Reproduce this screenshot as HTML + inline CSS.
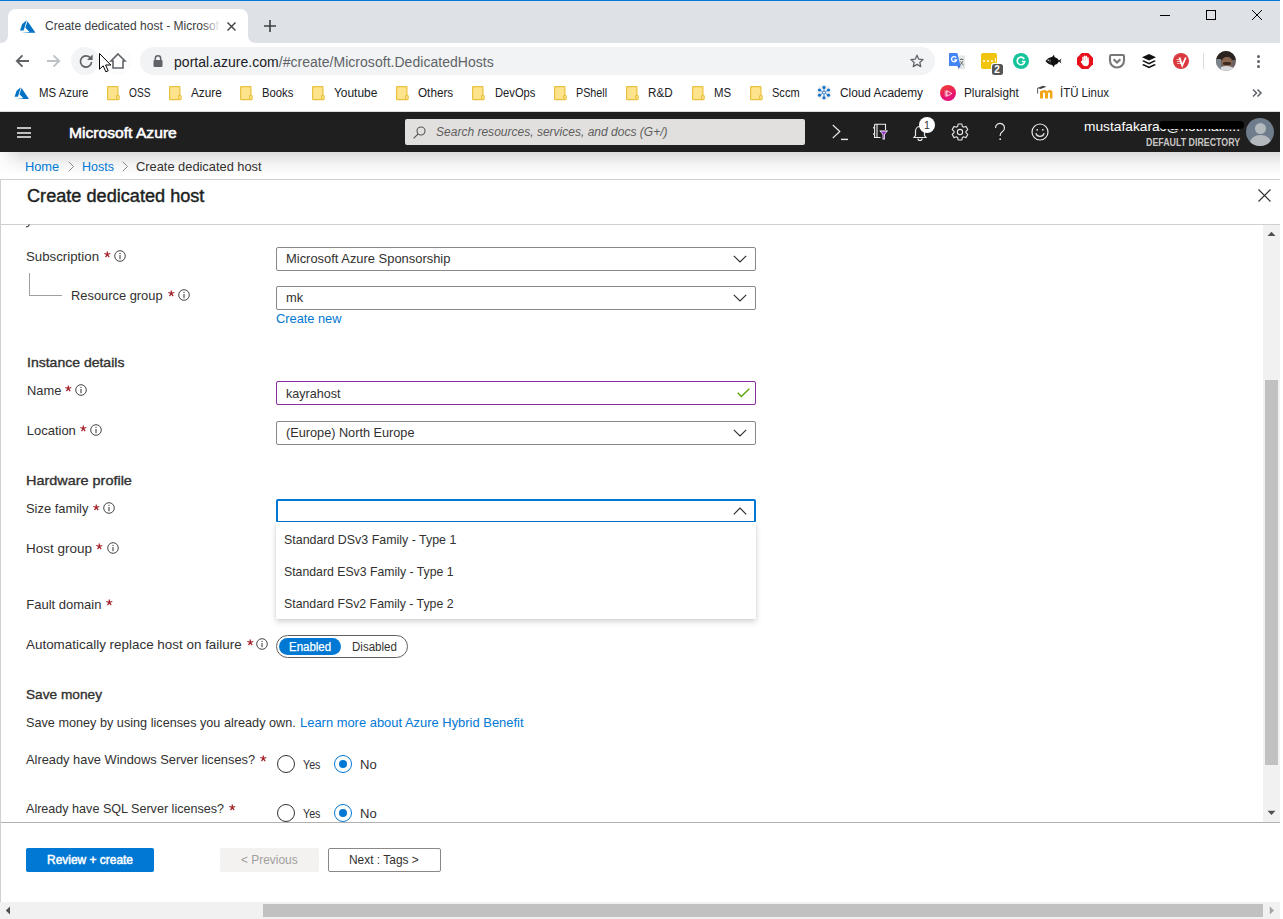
<!DOCTYPE html><html><head><meta charset="utf-8"><style>
*{margin:0;padding:0;box-sizing:border-box}
html,body{width:1283px;height:919px;overflow:hidden;background:#fff;font-family:"Liberation Sans",sans-serif}
.a{position:absolute}
.t{position:absolute;line-height:1;white-space:pre;transform-origin:0 0;font-family:"Liberation Sans",sans-serif}
svg{position:absolute;overflow:visible}
</style></head><body><div class="a" style="left:0;top:0;width:1280px;height:1px;background:#0078d7"></div>
<div class="a" style="left:0;top:1px;width:1280px;height:42px;background:#dee1e6"></div>
<div class="a" style="left:8px;top:9px;width:240px;height:35px;background:#fff;border-radius:8px 8px 0 0"></div>
<svg style="left:0;top:35px" width="8" height="8"><path d="M0 8 Q8 8 8 0 L8 8Z" fill="#fff"/></svg>
<svg style="left:248px;top:35px" width="8" height="8"><path d="M0 0 Q0 8 8 8 L0 8Z" fill="#fff"/></svg>
<svg style="left:20px;top:20px" width="16" height="14" viewBox="0 0 16 14"><path d="M6.8 0.3 L2.2 4 L0 10.5 L3.6 10.5Z" fill="#0072c6"/><path d="M7.5 1.2 L5.3 7.8 L9.5 12 L1.5 12.8 L15.5 12.8Z" fill="#0072c6"/></svg>
<div class="t" style="left:44.60px;top:19.84px;font-size:12px;color:#3c4043;font-weight:400;font-style:normal;transform:scaleX(1.0032);">Create dedicated host - Microsof</div>
<div class="a" style="left:203px;top:14px;width:18px;height:22px;background:linear-gradient(90deg,rgba(255,255,255,0),#fff 95%)"></div>
<svg style="left:227px;top:22px" width="9" height="9"><path d="M0.5 0.5L8.5 8.5M8.5 0.5L0.5 8.5" stroke="#3c4043" stroke-width="1.4"/></svg>
<svg style="left:264px;top:20px" width="12" height="12"><path d="M6 0V12M0 6H12" stroke="#3c4043" stroke-width="1.6"/></svg>
<div class="a" style="left:1160px;top:15px;width:10px;height:1px;background:#000"></div>
<div class="a" style="left:1206px;top:10px;width:10px;height:10px;border:1px solid #000"></div>
<svg style="left:1252px;top:10px" width="10" height="10"><path d="M0 0L10 10M10 0L0 10" stroke="#000" stroke-width="1"/></svg>
<div class="a" style="left:1280px;top:0;width:3px;height:919px;background:#fff"></div>
<svg style="left:15px;top:54px" width="14" height="14"><path d="M14 7H2M7.5 1.3L1.8 7L7.5 12.7" stroke="#5f6368" stroke-width="1.8" fill="none"/></svg>
<svg style="left:47px;top:54px" width="14" height="14"><path d="M0 7H12M6.5 1.3L12.2 7L6.5 12.7" stroke="#bdc1c6" stroke-width="1.8" fill="none"/></svg>
<div class="a" style="left:71px;top:47px;width:28px;height:28px;border-radius:50%;background:#f3f4f5"></div>
<div class="a" style="left:104px;top:47px;width:28px;height:28px;border-radius:50%;background:#fcfcfc"></div>
<svg style="left:79px;top:54px" width="14" height="14" viewBox="0 0 14 14"><path d="M11.6 4.2A5.6 5.6 0 1 0 12.6 8" stroke="#5f6368" stroke-width="1.7" fill="none"/><path d="M13.6 0.4V6H8Z" fill="#5f6368"/></svg>
<svg style="left:110px;top:53px" width="16" height="16" viewBox="0 0 16 16"><path d="M8 1L15 8H13V15H3V8H1Z" stroke="#5f6368" stroke-width="1.6" fill="none" stroke-linejoin="miter"/></svg>
<div class="a" style="left:140px;top:47px;width:795px;height:28px;border-radius:14px;background:#f1f3f4"></div>
<svg style="left:153px;top:55px" width="10" height="12" viewBox="0 0 10 12"><path d="M2.3 5V3.5A2.7 2.7 0 0 1 7.7 3.5V5" stroke="#5f6368" stroke-width="1.5" fill="none"/><rect x="0.5" y="5" width="9" height="7" rx="1" fill="#5f6368"/></svg>
<div class="t" style="left:174px;top:55.05px;letter-spacing:0.03px;font-size:14px;color:#202124;">portal.azure.com<span style="color:#5f6368">/#create/Microsoft.DedicatedHosts</span></div>
<svg style="left:909px;top:53px" width="16" height="16" viewBox="0 0 24 24"><path d="M12 3.2l2.6 6 6.5.6-4.9 4.3 1.5 6.4L12 17.1l-5.7 3.4 1.5-6.4-4.9-4.3 6.5-.6z" stroke="#5f6368" stroke-width="1.9" fill="none" stroke-linejoin="round"/></svg>
<svg style="left:949px;top:53px" width="17" height="17" viewBox="0 0 17 17"><rect x="9.5" y="2.5" width="6.5" height="13.5" fill="#e6e6e6"/><path d="M11 6.5H14.5M12.7 5.5V6.5M11.5 8.5L14.5 12.5M14 8L11 12" stroke="#4a5a5a" stroke-width="0.8"/><path d="M0 0.5Q0 0 0.5 0H8.3L11.6 13H0.5Q0 13 0 12.5Z" fill="#4285f4"/><path d="M8.5 13H11.6L9.5 15.7Z" fill="#3367d6"/><path d="M7.2 4.6A2.6 2.6 0 1 0 7.6 7H5.2" stroke="#fff" stroke-width="1.3" fill="none"/></svg>
<div class="a" style="left:981px;top:53px;width:16px;height:16px;background:#f1c40f;border-radius:2px"></div>
<div class="a" style="left:983.2px;top:60px;width:2px;height:2px;border-radius:50%;background:#fff"></div>
<div class="a" style="left:987.2px;top:60px;width:2px;height:2px;border-radius:50%;background:#fff"></div>
<div class="a" style="left:991.2px;top:60px;width:2px;height:2px;border-radius:50%;background:#fff"></div>
<div class="a" style="left:994.6px;top:58px;width:1px;height:4px;background:#fff8d0"></div>
<div class="a" style="left:990.5px;top:62.5px;width:13px;height:13px;background:#fff;border-radius:3px"></div>
<div class="a" style="left:991.5px;top:63.5px;width:11px;height:11px;background:#555;border-radius:2.5px"></div>
<div class="t" style="left:994.2px;top:64.6px;font-size:10px;color:#fff;font-weight:700">2</div>
<div class="a" style="left:1013px;top:53px;width:16px;height:16px;background:#15c39a;border-radius:50%"></div>
<svg style="left:1016px;top:56px" width="10" height="10" viewBox="0 0 10 10"><path d="M8.3 3A3.8 3.8 0 1 0 8.8 5.5H5.8" stroke="#fff" stroke-width="1.6" fill="none"/></svg>
<svg style="left:1045px;top:54px" width="17" height="14" viewBox="0 0 17 14"><path d="M0.5 7Q3 3.5 7 3L9 0.8L9.5 3Q13 4 14 6.5L16.5 4.5L15.5 7L16.5 9.5L14 7.5Q13 10 9.5 11L9 13.2L7 11Q3 10.5 0.5 7Z" fill="#111"/><circle cx="3.2" cy="6.3" r="0.7" fill="#fff"/><path d="M5 5.5V8.5" stroke="#fff" stroke-width="0.5"/></svg>
<svg style="left:1077px;top:53px" width="16" height="16" viewBox="0 0 16 16"><path d="M4.7 0H11.3L16 4.7V11.3L11.3 16H4.7L0 11.3V4.7Z" fill="#e8101a"/><path d="M6 8.5V4.2M7.7 8V3.2M9.4 8V3.6M11 8.8V5" stroke="#fff" stroke-width="1.5" stroke-linecap="round" fill="none"/><path d="M5.2 7.5H11.8V10.5Q11.8 13.3 8.6 13.3Q6.5 13.3 5.5 11.5L3.8 8.8Q3.6 8 4.5 8.1Z" fill="#fff"/></svg>
<svg style="left:1109px;top:54px" width="16" height="15" viewBox="0 0 16 15"><path d="M2.2 1H13.8Q15 1 15 2.2V6.5A7 7 0 0 1 1 6.5V2.2Q1 1 2.2 1Z" stroke="#777" stroke-width="2.1" fill="none"/><path d="M4.6 5.2L8 8.6L11.4 5.2" stroke="#777" stroke-width="2.1" fill="none"/></svg>
<svg style="left:1141px;top:53px" width="16" height="16" viewBox="0 0 16 16"><path d="M8 1L15 4.3L8 7.6L1 4.3Z" fill="#111"/><path d="M2.6 7.3L1 8.1L8 11.4L15 8.1L13.4 7.3L8 9.8Z" fill="#111"/><path d="M2.6 11.1L1 11.9L8 15.2L15 11.9L13.4 11.1L8 13.6Z" fill="#111"/></svg>
<div class="a" style="left:1173px;top:53px;width:16px;height:16px;background:#da3940;border-radius:50%"></div>
<svg style="left:1176px;top:57px" width="11" height="9" viewBox="0 0 11 9"><path d="M3.5 0.5L6.2 8.5L9.8 0.5" stroke="#fff" stroke-width="1.8" fill="none"/><path d="M0.5 2.5H4.3M0.8 4.5H4.9M1.1 6.5H5.5" stroke="#fff" stroke-width="0.7"/></svg>
<div class="a" style="left:1203px;top:53px;width:1px;height:16px;background:#dadce0"></div>
<div class="a" style="left:1216px;top:51px;width:20px;height:20px;border-radius:50%;overflow:hidden;background:#6b6460"><div class="a" style="left:0;top:0;width:20px;height:9px;background:#2a2320"></div><div class="a" style="left:6px;top:6px;width:10px;height:10px;border-radius:45%;background:#8a6550"></div><div class="a" style="left:7px;top:11px;width:8px;height:3px;background:#3a2a22;border-radius:40%"></div><div class="a" style="left:3px;top:15px;width:15px;height:6px;background:#d8d8dc;border-radius:50% 50% 0 0"></div><div class="a" style="left:0;top:8px;width:5px;height:12px;background:#7d848c"></div></div>
<div class="a" style="left:1257px;top:54.6px;width:3.4px;height:3.4px;border-radius:50%;background:#5f6368"></div>
<div class="a" style="left:1257px;top:59.6px;width:3.4px;height:3.4px;border-radius:50%;background:#5f6368"></div>
<div class="a" style="left:1257px;top:64.8px;width:3.4px;height:3.4px;border-radius:50%;background:#5f6368"></div>
<svg style="left:14px;top:87px" width="16" height="13" viewBox="0 0 16 14"><path d="M6.8 0.3 L2.2 4 L0 10.5 L3.6 10.5Z" fill="#0072c6"/><path d="M7.5 1.2 L5.3 7.8 L9.5 12 L1.5 12.8 L15.5 12.8Z" fill="#0072c6"/></svg>
<div class="t" style="left:38.70px;top:86.54px;font-size:12px;color:#202124;font-weight:400;font-style:normal;transform:scaleX(0.9497);">MS Azure</div>
<svg style="left:107px;top:86px" width="13" height="15" viewBox="0 0 13 15"><rect x="0.6" y="0.6" width="10.3" height="13" rx="0.6" fill="#fde48c" stroke="#e9c140" stroke-width="1.2"/><rect x="9.6" y="9.2" width="2.6" height="4.4" rx="1" fill="#fde48c" stroke="#e9c140" stroke-width="1.1"/></svg>
<div class="t" style="left:129.00px;top:86.54px;font-size:12px;color:#202124;font-weight:400;font-style:normal;transform:scaleX(0.8444);">OSS</div>
<svg style="left:169px;top:86px" width="13" height="15" viewBox="0 0 13 15"><rect x="0.6" y="0.6" width="10.3" height="13" rx="0.6" fill="#fde48c" stroke="#e9c140" stroke-width="1.2"/><rect x="9.6" y="9.2" width="2.6" height="4.4" rx="1" fill="#fde48c" stroke="#e9c140" stroke-width="1.1"/></svg>
<div class="t" style="left:190.50px;top:86.54px;font-size:12px;color:#202124;font-weight:400;font-style:normal;transform:scaleX(0.9827);">Azure</div>
<svg style="left:240px;top:86px" width="13" height="15" viewBox="0 0 13 15"><rect x="0.6" y="0.6" width="10.3" height="13" rx="0.6" fill="#fde48c" stroke="#e9c140" stroke-width="1.2"/><rect x="9.6" y="9.2" width="2.6" height="4.4" rx="1" fill="#fde48c" stroke="#e9c140" stroke-width="1.1"/></svg>
<div class="t" style="left:262.40px;top:86.54px;font-size:12px;color:#202124;font-weight:400;font-style:normal;transform:scaleX(0.9413);">Books</div>
<svg style="left:312px;top:86px" width="13" height="15" viewBox="0 0 13 15"><rect x="0.6" y="0.6" width="10.3" height="13" rx="0.6" fill="#fde48c" stroke="#e9c140" stroke-width="1.2"/><rect x="9.6" y="9.2" width="2.6" height="4.4" rx="1" fill="#fde48c" stroke="#e9c140" stroke-width="1.1"/></svg>
<div class="t" style="left:334.00px;top:86.54px;font-size:12px;color:#202124;font-weight:400;font-style:normal;transform:scaleX(0.9929);">Youtube</div>
<svg style="left:396px;top:86px" width="13" height="15" viewBox="0 0 13 15"><rect x="0.6" y="0.6" width="10.3" height="13" rx="0.6" fill="#fde48c" stroke="#e9c140" stroke-width="1.2"/><rect x="9.6" y="9.2" width="2.6" height="4.4" rx="1" fill="#fde48c" stroke="#e9c140" stroke-width="1.1"/></svg>
<div class="t" style="left:418.00px;top:86.54px;font-size:12px;color:#202124;font-weight:400;font-style:normal;transform:scaleX(0.9774);">Others</div>
<svg style="left:472px;top:86px" width="13" height="15" viewBox="0 0 13 15"><rect x="0.6" y="0.6" width="10.3" height="13" rx="0.6" fill="#fde48c" stroke="#e9c140" stroke-width="1.2"/><rect x="9.6" y="9.2" width="2.6" height="4.4" rx="1" fill="#fde48c" stroke="#e9c140" stroke-width="1.1"/></svg>
<div class="t" style="left:494.60px;top:86.54px;font-size:12px;color:#202124;font-weight:400;font-style:normal;transform:scaleX(0.9321);">DevOps</div>
<svg style="left:554px;top:86px" width="13" height="15" viewBox="0 0 13 15"><rect x="0.6" y="0.6" width="10.3" height="13" rx="0.6" fill="#fde48c" stroke="#e9c140" stroke-width="1.2"/><rect x="9.6" y="9.2" width="2.6" height="4.4" rx="1" fill="#fde48c" stroke="#e9c140" stroke-width="1.1"/></svg>
<div class="t" style="left:576.40px;top:86.54px;font-size:12px;color:#202124;font-weight:400;font-style:normal;transform:scaleX(0.8966);">PShell</div>
<svg style="left:626px;top:86px" width="13" height="15" viewBox="0 0 13 15"><rect x="0.6" y="0.6" width="10.3" height="13" rx="0.6" fill="#fde48c" stroke="#e9c140" stroke-width="1.2"/><rect x="9.6" y="9.2" width="2.6" height="4.4" rx="1" fill="#fde48c" stroke="#e9c140" stroke-width="1.1"/></svg>
<div class="t" style="left:648.40px;top:86.54px;font-size:12px;color:#202124;font-weight:400;font-style:normal;transform:scaleX(0.9707);">R&amp;D</div>
<svg style="left:692px;top:86px" width="13" height="15" viewBox="0 0 13 15"><rect x="0.6" y="0.6" width="10.3" height="13" rx="0.6" fill="#fde48c" stroke="#e9c140" stroke-width="1.2"/><rect x="9.6" y="9.2" width="2.6" height="4.4" rx="1" fill="#fde48c" stroke="#e9c140" stroke-width="1.1"/></svg>
<div class="t" style="left:713.90px;top:86.54px;font-size:12px;color:#202124;font-weight:400;font-style:normal;transform:scaleX(0.9500);">MS</div>
<svg style="left:750px;top:86px" width="13" height="15" viewBox="0 0 13 15"><rect x="0.6" y="0.6" width="10.3" height="13" rx="0.6" fill="#fde48c" stroke="#e9c140" stroke-width="1.2"/><rect x="9.6" y="9.2" width="2.6" height="4.4" rx="1" fill="#fde48c" stroke="#e9c140" stroke-width="1.1"/></svg>
<div class="t" style="left:772.00px;top:86.54px;font-size:12px;color:#202124;font-weight:400;font-style:normal;transform:scaleX(0.9200);">Sccm</div>
<svg style="left:816px;top:85px" width="16" height="16" viewBox="0 0 16 16"><circle cx="8" cy="7.6" r="7.6" fill="#efefef"/><g stroke="#2a7fd0" stroke-width="0.8"><path d="M8 6V2.6M8 9.2V12.6M6.6 6.8L3.5 5M9.4 6.8L12.5 5M6.6 8.4L3.5 10.2M9.4 8.4L12.5 10.2"/></g><circle cx="8" cy="7.6" r="1.6" fill="none" stroke="#2a7fd0" stroke-width="0.9"/><g fill="#1b74c8"><circle cx="8" cy="2.4" r="1.6"/><circle cx="8" cy="12.8" r="1.6"/><circle cx="3.5" cy="5" r="1.6"/><circle cx="12.5" cy="5" r="1.6"/><circle cx="3.5" cy="10.2" r="1.6"/><circle cx="12.5" cy="10.2" r="1.6"/></g></svg>
<div class="t" style="left:840.00px;top:86.54px;font-size:12px;color:#202124;font-weight:400;font-style:normal;transform:scaleX(0.9875);">Cloud Academy</div>
<div class="a" style="left:940px;top:85px;width:16px;height:16px;border-radius:50%;background:linear-gradient(160deg,#f0452b,#e8166a 60%,#e0108a)"></div>
<svg style="left:944px;top:89px" width="9" height="9" viewBox="0 0 9 9"><path d="M3 1.8L7.8 4.5L3 7.2Z" fill="none" stroke="#fff" stroke-width="0.8"/><path d="M1.2 1.5V7.5M2.4 1.2V7.8" stroke="#fff" stroke-width="0.6"/></svg>
<div class="t" style="left:964.30px;top:86.54px;font-size:12px;color:#202124;font-weight:400;font-style:normal;transform:scaleX(0.9762);">Pluralsight</div>
<svg style="left:1036px;top:85px" width="17" height="14" viewBox="0 0 17 14"><path d="M4 6.5V13.5H7V8.5Q7 7.5 8 7.5Q9 7.5 9 8.5V13.5H12V8.5Q12 7.5 13 7.5Q14 7.5 14 8.5V13.5H16.5V7.5Q16.5 5 14 5Q12.5 5 11 6.3Q10 5 8.5 5Q7 5 6 6V5.2Z" fill="#f2a516"/><path d="M1 3L7 0.8L10.5 1.8L4.5 4Z" fill="#444"/><path d="M1.6 3.2V8.5" stroke="#444" stroke-width="0.9"/></svg>
<div class="t" style="left:1059.60px;top:86.54px;font-size:12px;color:#202124;font-weight:400;font-style:normal;transform:scaleX(0.9541);">İTÜ Linux</div>
<svg style="left:1252px;top:89px" width="10" height="8" viewBox="0 0 10 8"><path d="M1 0.5L4.5 4L1 7.5M5.5 0.5L9 4L5.5 7.5" stroke="#5f6368" stroke-width="1.5" fill="none"/></svg>
<div class="a" style="left:0;top:111px;width:1280px;height:1px;background:#dadce0"></div>
<div class="a" style="left:0;top:112px;width:1280px;height:40px;background:#1f1f1f"></div>
<div class="a" style="left:17px;top:127px;width:14px;height:2px;background:#c0c0c0"></div>
<div class="a" style="left:17px;top:131.5px;width:14px;height:2px;background:#c0c0c0"></div>
<div class="a" style="left:17px;top:136px;width:14px;height:2px;background:#c0c0c0"></div>
<div class="t" style="left:68.50px;top:125.53px;font-size:14.5px;color:#fff;font-weight:400;font-style:normal;transform:scaleX(1.0788);-webkit-text-stroke:0.35px #fff;-webkit-text-stroke:0.55px #fff;">Microsoft Azure</div>
<div class="a" style="left:405px;top:119px;width:400px;height:26px;background:#e1e0df;border-radius:2px"></div>
<svg style="left:413px;top:126px" width="13" height="13" viewBox="0 0 13 13"><circle cx="8" cy="5" r="4" stroke="#555" stroke-width="1.1" fill="none"/><path d="M5.2 7.8L0.6 12.4" stroke="#555" stroke-width="1.2"/></svg>
<div class="t" style="left:435.50px;top:126.12px;font-size:12.5px;color:#605e5c;font-weight:400;font-style:italic;transform:scaleX(0.9617);">Search resources, services, and docs (G+/)</div>
<svg style="left:832px;top:124px" width="17" height="17" viewBox="0 0 17 17"><path d="M0.8 1L7.8 7.5L0.8 14" stroke="#e8e8e8" stroke-width="1.2" fill="none"/><path d="M9 15.4H16" stroke="#e8e8e8" stroke-width="1.4"/></svg>
<svg style="left:872px;top:123px" width="17" height="17" viewBox="0 0 17 17"><path d="M2.6 1.3H13.5V7M2.6 1.3V14.5H8.5M5 1.3V14.5" stroke="#f0f0f0" stroke-width="1.1" fill="none"/><path d="M1 4.7H2.6M1 11H2.6" stroke="#d8d8d8" stroke-width="1.6"/><path d="M7.2 7.6H16.2L12.8 11.6V16.5H10.6V11.6Z" fill="#fff"/><path d="M8.6 8.5H14.8L12.1 11.3V15.6H11.3V11.3Z" fill="#8f30c0"/></svg>
<svg style="left:913px;top:124px" width="14" height="17" viewBox="0 0 14 17"><path d="M1 13.5H13L11.5 11.5V7A4.5 4.5 0 0 0 2.5 7V11.5Z" stroke="#e8e8e8" stroke-width="1.2" fill="none"/><path d="M5 14.5A2 2 0 0 0 9 14.5" stroke="#e8e8e8" stroke-width="1.2" fill="none"/></svg>
<div class="a" style="left:919px;top:117px;width:16px;height:16px;border-radius:50%;background:#fff"></div>
<div class="t" style="left:924px;top:119.5px;font-size:10.5px;color:#323130">1</div>
<svg style="left:950px;top:122px" width="20" height="20" viewBox="0 0 24 24"><path d="M19.14 12.94c.04-.3.06-.61.06-.94 0-.32-.02-.64-.07-.94l2.03-1.58c.18-.14.23-.41.12-.61l-1.92-3.32c-.12-.22-.37-.29-.59-.22l-2.39.96c-.5-.38-1.03-.7-1.62-.94l-.36-2.54c-.04-.24-.24-.41-.48-.41h-3.84c-.24 0-.43.17-.47.41l-.36 2.54c-.59.24-1.13.57-1.62.94l-2.39-.96c-.22-.08-.47 0-.59.22L2.74 8.87c-.12.21-.08.47.12.61l2.03 1.58c-.05.3-.09.63-.09.94s.02.64.07.94l-2.03 1.58c-.18.14-.23.41-.12.61l1.92 3.32c.12.22.37.29.59.22l2.39-.96c.5.38 1.03.7 1.62.94l.36 2.54c.05.24.24.41.48.41h3.84c.24 0 .44-.17.47-.41l.36-2.54c.59-.24 1.13-.56 1.62-.94l2.39.96c.22.08.47 0 .59-.22l1.92-3.32c.12-.22.07-.47-.12-.61l-2.01-1.58z" stroke="#e8e8e8" stroke-width="1.3" fill="none"/><circle cx="12" cy="12" r="3.2" stroke="#e8e8e8" stroke-width="1.3" fill="none"/></svg>
<svg style="left:994px;top:123px" width="12" height="18" viewBox="0 0 12 18"><path d="M1.5 5A4.5 4.5 0 1 1 8.5 8.6C7 9.6 6.2 10.5 6.2 12.3V13" stroke="#e8e8e8" stroke-width="1.2" fill="none"/><circle cx="6.2" cy="16.2" r="0.9" fill="#e8e8e8"/></svg>
<svg style="left:1031px;top:123px" width="18" height="18" viewBox="0 0 18 18"><circle cx="9" cy="9" r="8" stroke="#e8e8e8" stroke-width="1.2" fill="none"/><circle cx="6.2" cy="6.8" r="0.9" fill="#e8e8e8"/><circle cx="11.8" cy="6.8" r="0.9" fill="#e8e8e8"/><path d="M4.8 10.2A4.4 4.4 0 0 0 13.2 10.2" stroke="#e8e8e8" stroke-width="1.2" fill="none"/></svg>
<div class="t" style="left:1084.00px;top:119.60px;font-size:13px;color:#fff;font-weight:400;font-style:normal;transform:scaleX(1.0571);">mustafakarac@hotmail....</div>
<div class="a" style="left:1159px;top:121px;width:85px;height:8px;background:#000;border-radius:4px"></div>
<div class="t" style="left:1145.60px;top:137.53px;font-size:10px;color:#c8c6c4;font-weight:700;font-style:normal;transform:scaleX(0.8846);">DEFAULT DIRECTORY</div>
<div class="a" style="left:1246px;top:118px;width:28px;height:28px;border-radius:50%;background:#6e7c8c;overflow:hidden"><div class="a" style="left:8.5px;top:5px;width:11px;height:11px;border-radius:50%;background:#b4b9be"></div><div class="a" style="left:3.5px;top:17px;width:21px;height:16px;border-radius:50% 50% 0 0;background:#b4b9be"></div></div>
<div class="a" style="left:0;top:152px;width:1280px;height:28px;background:linear-gradient(#dcdcdc,#f4f4f4 45%,#fff 85%)"></div>
<div class="t" style="left:25.30px;top:159.80px;font-size:13px;color:#0078d4;font-weight:400;font-style:normal;transform:scaleX(0.9835);">Home</div>
<svg style="left:68px;top:161px" width="7" height="11"><path d="M0.8 0.8L5.5 5.5L0.8 10.2" stroke="#8a8886" stroke-width="1" fill="none"/></svg>
<div class="t" style="left:82.00px;top:159.80px;font-size:13px;color:#0078d4;font-weight:400;font-style:normal;transform:scaleX(0.9598);">Hosts</div>
<svg style="left:122px;top:161px" width="7" height="11"><path d="M0.8 0.8L5.5 5.5L0.8 10.2" stroke="#8a8886" stroke-width="1" fill="none"/></svg>
<div class="t" style="left:136.40px;top:159.80px;font-size:13px;color:#323130;font-weight:400;font-style:normal;transform:scaleX(0.9875);">Create dedicated host</div>
<div class="a" style="left:0;top:179px;width:1280px;height:1px;background:#d2d0ce"></div>
<div class="a" style="left:0;top:179px;width:1px;height:740px;background:#d2d0ce"></div>
<div class="t" style="left:26.60px;top:188.19px;font-size:17.5px;color:#201f1e;font-weight:400;font-style:normal;transform:scaleX(1.0361);-webkit-text-stroke:0.4px #201f1e;">Create dedicated host</div>
<svg style="left:1258px;top:189px" width="13" height="13"><path d="M0.5 0.5L12.5 12.5M12.5 0.5L0.5 12.5" stroke="#323130" stroke-width="1.1"/></svg>
<div class="a" style="left:1px;top:224px;width:1279px;height:1px;background:#d2d0ce"></div>
<svg style="left:25px;top:224px" width="6" height="4"><path d="M1 3C2.5 3 3.5 2.5 4.5 0.5" stroke="#323130" stroke-width="1.1" fill="none"/></svg>
<div class="a" style="left:0;top:152px;width:22px;height:27px;background:linear-gradient(90deg,rgba(255,255,255,0.85),rgba(255,255,255,0))"></div>
<div class="a" style="left:1263px;top:225px;width:17px;height:597px;background:#f1f1f1"></div>
<svg style="left:1267px;top:231px" width="9" height="6"><path d="M0.5 5L4.5 0.8L8.5 5Z" fill="#505050"/></svg>
<svg style="left:1267px;top:810px" width="9" height="6"><path d="M0.5 0.8L4.5 5L8.5 0.8Z" fill="#505050"/></svg>
<div class="a" style="left:1265px;top:380px;width:13px;height:385px;background:#c1c1c1"></div>
<div class="t" style="left:26.20px;top:249.70px;font-size:13px;color:#323130;font-weight:400;font-style:normal;transform:scaleX(1.0205);">Subscription</div>
<svg style="left:103.90px;top:251.00px" width="7" height="7" viewBox="0 0 7 7"><path d="M3.3 0.4V3.4M0.3 2.5L3.3 3.4L6.3 2.5M1.5 6.2L3.3 3.4L5.1 6.2" stroke="#a4262c" stroke-width="1.25" fill="none"/></svg>
<svg style="left:114px;top:250px" width="12" height="12" viewBox="0 0 12 12"><circle cx="6" cy="6" r="5.3" stroke="#323130" stroke-width="0.9" fill="none"/><path d="M6 5V9.2" stroke="#323130" stroke-width="1"/><circle cx="6" cy="3.3" r="0.65" fill="#323130"/></svg>
<div class="a" style="left:276px;top:247px;width:480px;height:24px;border:1px solid #8a8886;border-radius:2px;background:#fff"></div>
<div class="t" style="left:285.60px;top:252.20px;font-size:13px;color:#323130;font-weight:400;font-style:normal;transform:scaleX(0.9935);">Microsoft Azure Sponsorship</div>
<svg style="left:733px;top:255px" width="14" height="8"><path d="M0.8 0.8L7 7L13.2 0.8" stroke="#323130" stroke-width="1.2" fill="none"/></svg>
<div class="a" style="left:29px;top:273px;width:33px;height:23px;border-left:1px solid #a19f9d;border-bottom:1px solid #a19f9d"></div>
<div class="t" style="left:71.40px;top:288.70px;font-size:13px;color:#323130;font-weight:400;font-style:normal;transform:scaleX(0.9903);">Resource group</div>
<svg style="left:168.20px;top:290.00px" width="7" height="7" viewBox="0 0 7 7"><path d="M3.3 0.4V3.4M0.3 2.5L3.3 3.4L6.3 2.5M1.5 6.2L3.3 3.4L5.1 6.2" stroke="#a4262c" stroke-width="1.25" fill="none"/></svg>
<svg style="left:178px;top:289px" width="12" height="12" viewBox="0 0 12 12"><circle cx="6" cy="6" r="5.3" stroke="#323130" stroke-width="0.9" fill="none"/><path d="M6 5V9.2" stroke="#323130" stroke-width="1"/><circle cx="6" cy="3.3" r="0.65" fill="#323130"/></svg>
<div class="a" style="left:276px;top:286px;width:480px;height:24px;border:1px solid #8a8886;border-radius:2px;background:#fff"></div>
<div class="t" style="left:285.60px;top:291.20px;font-size:13px;color:#323130;font-weight:400;font-style:normal;transform:scaleX(0.9908);">mk</div>
<svg style="left:733px;top:294px" width="14" height="8"><path d="M0.8 0.8L7 7L13.2 0.8" stroke="#323130" stroke-width="1.2" fill="none"/></svg>
<div class="t" style="left:276.00px;top:312.30px;font-size:13px;color:#0078d4;font-weight:400;font-style:normal;transform:scaleX(0.9847);">Create new</div>
<div class="t" style="left:26.70px;top:355.80px;font-size:13px;color:#323130;font-weight:400;font-style:normal;transform:scaleX(1.0783);-webkit-text-stroke:0.35px #323130;">Instance details</div>
<div class="t" style="left:26.70px;top:383.90px;font-size:13px;color:#323130;font-weight:400;font-style:normal;transform:scaleX(0.9893);">Name</div>
<svg style="left:64.90px;top:385.20px" width="7" height="7" viewBox="0 0 7 7"><path d="M3.3 0.4V3.4M0.3 2.5L3.3 3.4L6.3 2.5M1.5 6.2L3.3 3.4L5.1 6.2" stroke="#a4262c" stroke-width="1.25" fill="none"/></svg>
<svg style="left:75px;top:384px" width="12" height="12" viewBox="0 0 12 12"><circle cx="6" cy="6" r="5.3" stroke="#323130" stroke-width="0.9" fill="none"/><path d="M6 5V9.2" stroke="#323130" stroke-width="1"/><circle cx="6" cy="3.3" r="0.65" fill="#323130"/></svg>
<div class="a" style="left:276px;top:381px;width:480px;height:24px;border:1px solid #8a2da5;border-radius:2px"></div>
<div class="t" style="left:285.70px;top:387.00px;font-size:13px;color:#323130;font-weight:400;font-style:normal;transform:scaleX(0.9670);">kayrahost</div>
<svg style="left:737px;top:388px" width="13" height="10"><path d="M0.8 4.8L4.3 8.5L12.3 0.8" stroke="#57a300" stroke-width="1.3" fill="none"/></svg>
<div class="t" style="left:26.70px;top:424.00px;font-size:13px;color:#323130;font-weight:400;font-style:normal;">Location</div>
<svg style="left:79.90px;top:425.30px" width="7" height="7" viewBox="0 0 7 7"><path d="M3.3 0.4V3.4M0.3 2.5L3.3 3.4L6.3 2.5M1.5 6.2L3.3 3.4L5.1 6.2" stroke="#a4262c" stroke-width="1.25" fill="none"/></svg>
<svg style="left:89.7px;top:424.3px" width="12" height="12" viewBox="0 0 12 12"><circle cx="6" cy="6" r="5.3" stroke="#323130" stroke-width="0.9" fill="none"/><path d="M6 5V9.2" stroke="#323130" stroke-width="1"/><circle cx="6" cy="3.3" r="0.65" fill="#323130"/></svg>
<div class="a" style="left:276px;top:421px;width:480px;height:24px;border:1px solid #8a8886;border-radius:2px;background:#fff"></div>
<div class="t" style="left:285.60px;top:426.20px;font-size:13px;color:#323130;font-weight:400;font-style:normal;transform:scaleX(0.9771);">(Europe) North Europe</div>
<svg style="left:733px;top:429px" width="14" height="8"><path d="M0.8 0.8L7 7L13.2 0.8" stroke="#323130" stroke-width="1.2" fill="none"/></svg>
<div class="t" style="left:26.30px;top:474.30px;font-size:13px;color:#323130;font-weight:400;font-style:normal;transform:scaleX(1.1104);-webkit-text-stroke:0.35px #323130;">Hardware profile</div>
<div class="t" style="left:26.30px;top:502.30px;font-size:13px;color:#323130;font-weight:400;font-style:normal;transform:scaleX(0.9929);">Size family</div>
<svg style="left:92.70px;top:503.60px" width="7" height="7" viewBox="0 0 7 7"><path d="M3.3 0.4V3.4M0.3 2.5L3.3 3.4L6.3 2.5M1.5 6.2L3.3 3.4L5.1 6.2" stroke="#a4262c" stroke-width="1.25" fill="none"/></svg>
<svg style="left:102.7px;top:502px" width="12" height="12" viewBox="0 0 12 12"><circle cx="6" cy="6" r="5.3" stroke="#323130" stroke-width="0.9" fill="none"/><path d="M6 5V9.2" stroke="#323130" stroke-width="1"/><circle cx="6" cy="3.3" r="0.65" fill="#323130"/></svg>
<div class="a" style="left:276px;top:499px;width:480px;height:24px;border:2px solid #0078d4;border-radius:2px;background:#fff"></div>
<svg style="left:733px;top:507px" width="14" height="8"><path d="M0.8 7.3L7 1L13.2 7.3" stroke="#323130" stroke-width="1.2" fill="none"/></svg>
<div class="t" style="left:26.30px;top:542.00px;font-size:13px;color:#323130;font-weight:400;font-style:normal;transform:scaleX(1.0378);">Host group</div>
<svg style="left:96.20px;top:543.30px" width="7" height="7" viewBox="0 0 7 7"><path d="M3.3 0.4V3.4M0.3 2.5L3.3 3.4L6.3 2.5M1.5 6.2L3.3 3.4L5.1 6.2" stroke="#a4262c" stroke-width="1.25" fill="none"/></svg>
<svg style="left:107px;top:541.7px" width="12" height="12" viewBox="0 0 12 12"><circle cx="6" cy="6" r="5.3" stroke="#323130" stroke-width="0.9" fill="none"/><path d="M6 5V9.2" stroke="#323130" stroke-width="1"/><circle cx="6" cy="3.3" r="0.65" fill="#323130"/></svg>
<div class="t" style="left:26.30px;top:597.70px;font-size:13px;color:#323130;font-weight:400;font-style:normal;">Fault domain</div>
<svg style="left:106.00px;top:599.00px" width="7" height="7" viewBox="0 0 7 7"><path d="M3.3 0.4V3.4M0.3 2.5L3.3 3.4L6.3 2.5M1.5 6.2L3.3 3.4L5.1 6.2" stroke="#a4262c" stroke-width="1.25" fill="none"/></svg>
<div class="t" style="left:26.30px;top:637.70px;font-size:13px;color:#323130;font-weight:400;font-style:normal;transform:scaleX(1.0329);">Automatically replace host on failure</div>
<svg style="left:247.00px;top:639.00px" width="7" height="7" viewBox="0 0 7 7"><path d="M3.3 0.4V3.4M0.3 2.5L3.3 3.4L6.3 2.5M1.5 6.2L3.3 3.4L5.1 6.2" stroke="#a4262c" stroke-width="1.25" fill="none"/></svg>
<svg style="left:256.4px;top:638.1px" width="12" height="12" viewBox="0 0 12 12"><circle cx="6" cy="6" r="5.3" stroke="#323130" stroke-width="0.9" fill="none"/><path d="M6 5V9.2" stroke="#323130" stroke-width="1"/><circle cx="6" cy="3.3" r="0.65" fill="#323130"/></svg>
<div class="a" style="left:276px;top:635px;width:132px;height:23px;border:1px solid #605e5c;border-radius:12px;background:#fff"></div>
<div class="a" style="left:279px;top:638px;width:62px;height:17px;border-radius:9px;background:#0078d4"></div>
<div class="t" style="left:288.70px;top:641.04px;font-size:12px;color:#fff;font-weight:400;font-style:normal;transform:scaleX(0.9558);-webkit-text-stroke:0.25px #fff;">Enabled</div>
<div class="t" style="left:351.50px;top:641.04px;font-size:12px;color:#323130;font-weight:400;font-style:normal;transform:scaleX(0.9617);">Disabled</div>
<div class="t" style="left:26.20px;top:687.67px;font-size:13.5px;color:#323130;font-weight:400;font-style:normal;transform:scaleX(1.0127);-webkit-text-stroke:0.35px #323130;">Save money</div>
<div class="t" style="left:26.20px;top:716.10px;font-size:13px;color:#323130;font-weight:400;font-style:normal;transform:scaleX(0.9748);">Save money by using licenses you already own.</div>
<div class="t" style="left:300.30px;top:716.10px;font-size:13px;color:#0078d4;font-weight:400;font-style:normal;transform:scaleX(0.9945);">Learn more about Azure Hybrid Benefit</div>
<div class="t" style="left:26.20px;top:753.40px;font-size:13px;color:#323130;font-weight:400;font-style:normal;transform:scaleX(0.9878);">Already have Windows Server licenses?</div>
<svg style="left:260.30px;top:754.70px" width="7" height="7" viewBox="0 0 7 7"><path d="M3.3 0.4V3.4M0.3 2.5L3.3 3.4L6.3 2.5M1.5 6.2L3.3 3.4L5.1 6.2" stroke="#a4262c" stroke-width="1.25" fill="none"/></svg>
<div class="a" style="left:277px;top:755px;width:18px;height:18px;border-radius:50%;border:1px solid #323130;background:#fff"></div>
<div class="t" style="left:303.40px;top:757.80px;font-size:13px;color:#323130;font-weight:400;font-style:normal;transform:scaleX(0.8206);">Yes</div>
<div class="a" style="left:334px;top:755px;width:18px;height:18px;border-radius:50%;border:1px solid #0078d4;background:#fff"></div>
<div class="a" style="left:339px;top:760px;width:8px;height:8px;border-radius:50%;background:#0078d4"></div>
<div class="t" style="left:360.00px;top:757.80px;font-size:13px;color:#323130;font-weight:400;font-style:normal;transform:scaleX(1.0045);">No</div>
<div class="t" style="left:26.20px;top:802.40px;font-size:13px;color:#323130;font-weight:400;font-style:normal;transform:scaleX(0.9671);">Already have SQL Server licenses?</div>
<svg style="left:228.90px;top:803.70px" width="7" height="7" viewBox="0 0 7 7"><path d="M3.3 0.4V3.4M0.3 2.5L3.3 3.4L6.3 2.5M1.5 6.2L3.3 3.4L5.1 6.2" stroke="#a4262c" stroke-width="1.25" fill="none"/></svg>
<div class="a" style="left:277px;top:804px;width:18px;height:18px;border-radius:50%;border:1px solid #323130;background:#fff"></div>
<div class="t" style="left:303.40px;top:806.80px;font-size:13px;color:#323130;font-weight:400;font-style:normal;transform:scaleX(0.8206);">Yes</div>
<div class="a" style="left:334px;top:804px;width:18px;height:18px;border-radius:50%;border:1px solid #0078d4;background:#fff"></div>
<div class="a" style="left:339px;top:809px;width:8px;height:8px;border-radius:50%;background:#0078d4"></div>
<div class="t" style="left:360.00px;top:806.80px;font-size:13px;color:#323130;font-weight:400;font-style:normal;transform:scaleX(1.0045);">No</div>
<div class="a" style="left:276px;top:522px;width:480px;height:97px;background:#fff;box-shadow:0 3px 6px rgba(0,0,0,0.16),0 0 2px rgba(0,0,0,0.1)"></div>
<div class="t" style="left:284.10px;top:533.00px;font-size:13px;color:#323130;font-weight:400;font-style:normal;transform:scaleX(0.9551);">Standard DSv3 Family - Type 1</div>
<div class="t" style="left:284.10px;top:564.80px;font-size:13px;color:#323130;font-weight:400;font-style:normal;transform:scaleX(0.9439);">Standard ESv3 Family - Type 1</div>
<div class="t" style="left:284.10px;top:596.70px;font-size:13px;color:#323130;font-weight:400;font-style:normal;transform:scaleX(0.9477);">Standard FSv2 Family - Type 2</div>
<div class="a" style="left:1px;top:822px;width:1279px;height:97px;background:#fff"></div>
<div class="a" style="left:1px;top:822px;width:1279px;height:1px;background:#b3b0ad"></div>
<div class="a" style="left:26px;top:848px;width:128px;height:24px;background:#0078d4;border-radius:2px"></div>
<div class="t" style="left:47.00px;top:853.20px;font-size:13px;color:#fff;font-weight:400;font-style:normal;transform:scaleX(0.9190);-webkit-text-stroke:0.35px #fff;-webkit-text-stroke:0.5px #fff;">Review + create</div>
<div class="a" style="left:220px;top:848px;width:99px;height:24px;background:#f3f2f1;border-radius:2px"></div>
<div class="t" style="left:241.40px;top:853.20px;font-size:13px;color:#a19f9d;font-weight:400;font-style:normal;transform:scaleX(0.9161);">&lt; Previous</div>
<div class="a" style="left:328px;top:848px;width:113px;height:24px;border:1px solid #8a8886;border-radius:2px"></div>
<div class="t" style="left:349.20px;top:853.20px;font-size:13px;color:#323130;font-weight:400;font-style:normal;transform:scaleX(0.9184);">Next : Tags &gt;</div>
<div class="a" style="left:0;top:902px;width:1280px;height:17px;background:#f1f1f1"></div>
<div class="a" style="left:263px;top:904px;width:1000px;height:13px;background:#c1c1c1"></div>
<svg style="left:5px;top:906px" width="6" height="9"><path d="M5 0.5L0.8 4.5L5 8.5Z" fill="#505050"/></svg>
<svg style="left:1269px;top:906px" width="6" height="9"><path d="M0.8 0.5L5 4.5L0.8 8.5Z" fill="#a3a3a3"/></svg>
<svg style="left:99px;top:53px" width="13" height="20" viewBox="0 0 13 20"><path d="M0.5 0.5V16.2L4.2 12.8L6.8 18.8L9.2 17.8L6.6 12H11.8Z" fill="#fff" stroke="#000" stroke-width="1"/></svg></body></html>
